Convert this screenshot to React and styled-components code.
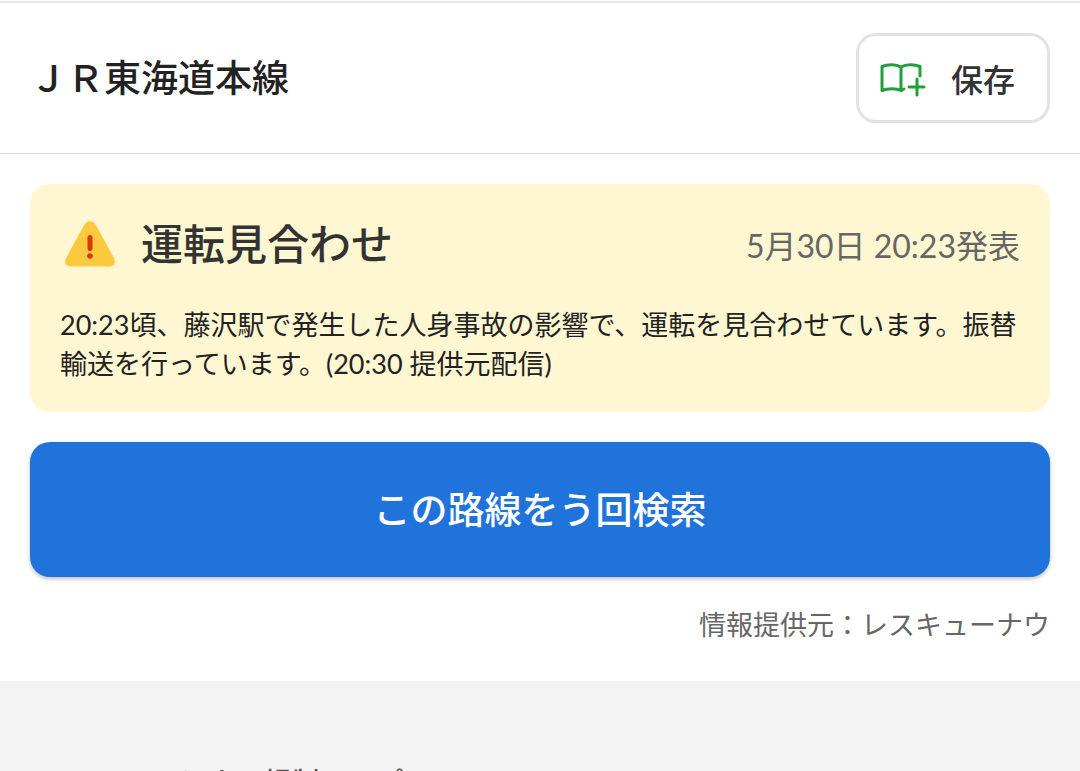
import React from 'react'
import styled, { createGlobalStyle } from 'styled-components';

const GlobalStyle = createGlobalStyle`
    * {
        box-sizing: border-box;
    }
    body {
        margin: 0;
        overflow: hidden;
        background: #f3f3f3;
        color: #222;
        font-family: Lato, 'Noto Sans CJK JP', sans-serif;
    }
    h1, h2, p {
        margin: 0;
    }
    button {
        font-family: inherit;
        cursor: pointer;
    }
`;

const Page = styled.main`
    background: #fff;
    border-top: 1px solid #fff;
`;

const Header = styled.header`
    display: flex;
    align-items: center;
    justify-content: space-between;
    height: 153px;
    padding: 0 30px;
    border-top: 2px solid #e3e3e3;
    border-bottom: 1px solid #d8d8d8;
`;

const LineName = styled.h1`
    font-size: 37px;
    line-height: 48px;
    font-weight: 500;
`;

const SaveButton = styled.button`
    display: flex;
    align-items: center;
    gap: 24px;
    height: 90px;
    padding: 3px 32px 0 20px;
    background: #fff;
    border: 3px solid #e3e3e3;
    border-radius: 20px;
    color: #333;
    font-size: 32px;
    line-height: 48px;
    font-weight: 500;
`;

const Content = styled.section`
    display: flex;
    flex-direction: column;
    gap: 30px;
    padding: 30px 30px 39px;
`;

const Notice = styled.article`
    padding: 30px 0 29px 30px;
    background: #fff7d1;
    border-radius: 20px;
`;

const NoticeHead = styled.div`
    display: flex;
    align-items: center;
    gap: 21px;
    margin-bottom: 31px;
    padding-right: 30px;
`;

const Status = styled.h2`
    flex: 1;
    color: #333;
    font-size: 42px;
    line-height: 60px;
    font-weight: 500;
`;

const Announced = styled.time`
    padding-top: 3px;
    color: #666;
    font-size: 32px;
    line-height: 48px;
`;

const Detail = styled.p`
    padding-right: 24px;
    font-size: 27px;
    line-height: 39px;
`;

const SearchButton = styled.button`
    height: 135px;
    border: none;
    border-radius: 20px;
    background: #2173dc;
    box-shadow: 0 2px 4px rgba(0, 0, 0, 0.25);
    color: #fff;
    font-size: 37px;
    line-height: 48px;
    font-weight: 500;
`;

const Provider = styled.p`
    color: #666;
    font-size: 27px;
    line-height: 35px;
    text-align: right;
`;

const Footer = styled.footer`
    padding: 80px 96px 0;
    color: #555;
    font-size: 28px;
    line-height: 42px;
    font-weight: 500;
`;

function BookPlusIcon() {
    return (
        <svg width="48" height="36" viewBox="0 0 48 36" fill="none" stroke="#21a038" strokeWidth="3" strokeLinecap="round" strokeLinejoin="round" aria-hidden="true">
            <path d="M22 5C17 2 9 2 3 4.500v24c6-2.500 14-2.500 19 0V5c5-3 13-3 19-.5v9.500" />
            <path d="M22 28.500l3-1.500M38 17v16M30 25h15" />
        </svg>
    )
}

function WarningIcon() {
    return (
        <svg width="60" height="60" viewBox="0 0 60 60" aria-hidden="true">
            <path d="M24.500 10.500c2.500-4.500 8.500-4.500 11 0l18.500 33.500c2.200 4 0 8.500-4.500 8.500h-39C6 52.500 3.800 48 6 44z" fill="#fbc93d" />
            <path d="M30 23.500v11" stroke="#d63a0a" strokeWidth="5" strokeLinecap="round" />
            <circle cx="30" cy="42" r="2.800" fill="#d63a0a" />
        </svg>
    )
}

export default function App() {
    return (
        <>
            <GlobalStyle />
            <Page>
                <Header>
                    <LineName>ＪＲ東海道本線</LineName>
                    <SaveButton type="button">
                        <BookPlusIcon />
                        保存
                    </SaveButton>
                </Header>
                <Content>
                    <Notice>
                        <NoticeHead>
                            <WarningIcon />
                            <Status>運転見合わせ</Status>
                            <Announced>5月30日 20:23発表</Announced>
                        </NoticeHead>
                        <Detail>
                            20:23頃、藤沢駅で発生した人身事故の影響で、運転を見合わせています。振替輸送を行っています。(20:30 提供元配信)
                        </Detail>
                    </Notice>
                    <SearchButton type="button">この路線をう回検索</SearchButton>
                    <Provider>情報提供元：レスキューナウ</Provider>
                </Content>
            </Page>
            <Footer>エリアによる規制マップ</Footer>
        </>
    )
}
